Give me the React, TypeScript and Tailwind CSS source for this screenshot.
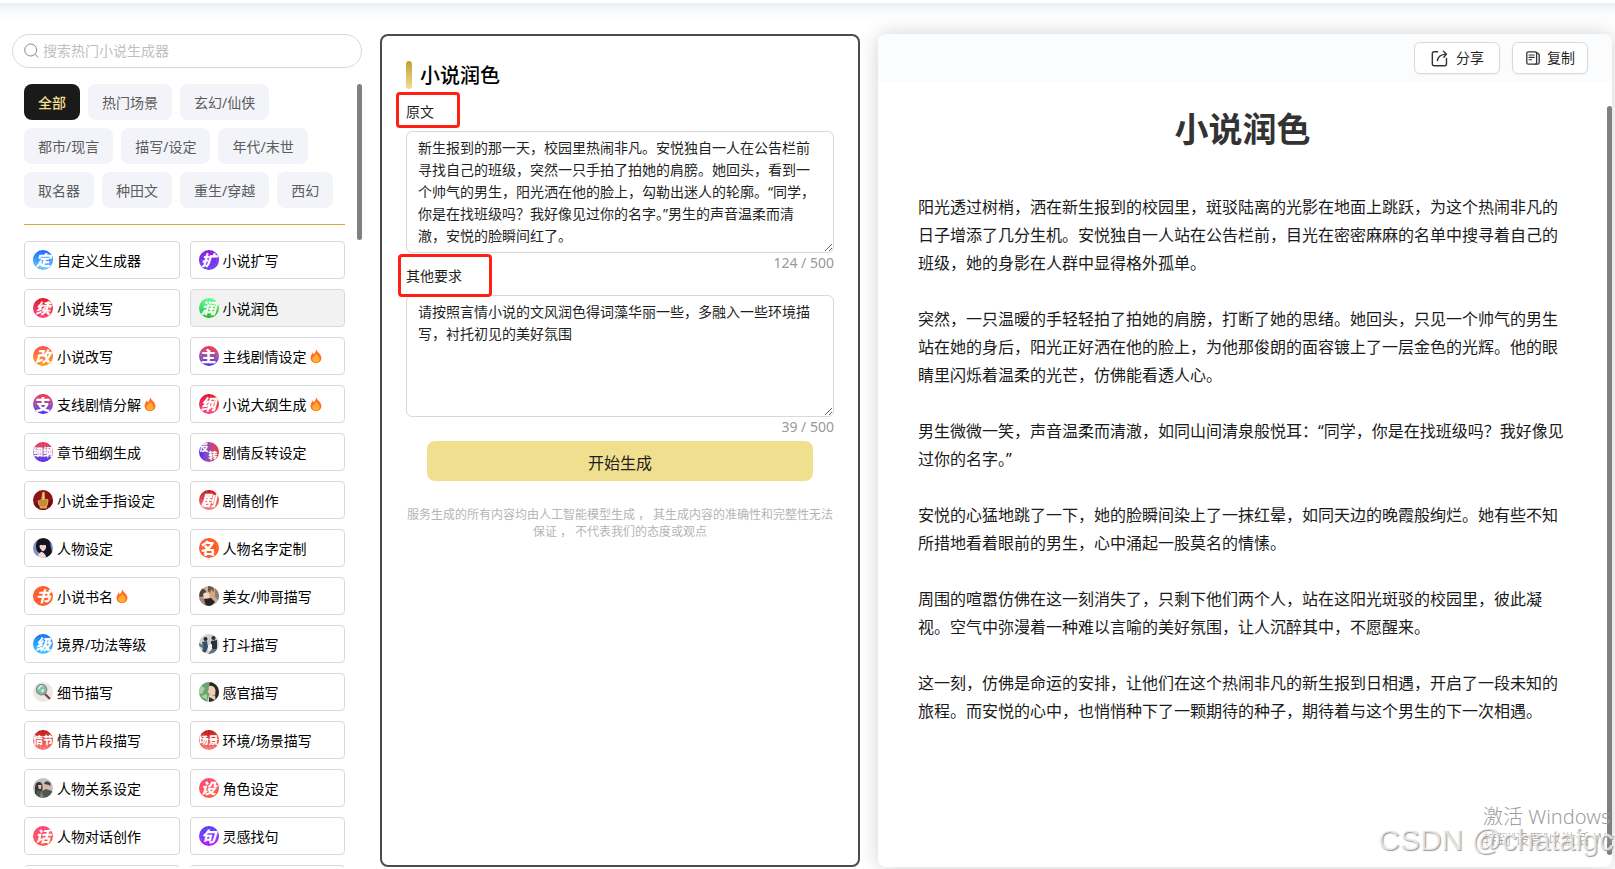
import { useState } from 'react';
import type { ReactNode } from 'react';

const TAGS = ['全部', '热门场景', '玄幻/仙侠', '都市/现言', '描写/设定', '年代/末世', '取名器', '种田文', '重生/穿越', '西幻'];

type Tool = { name: string; icon: ReactNode; hot?: boolean };

function Badge({ text, color, upright }: { text: string; color: string; upright?: boolean }) {
    return (
        <span
            aria-hidden="true"
            className={`relative flex h-5 w-5 shrink-0 items-center justify-center overflow-hidden rounded-full font-black text-white whitespace-nowrap ${upright ? '' : 'italic'} ${text.length > 1 ? 'text-[10px]' : 'text-[15px]'} ${color}`}
        >
            <svg viewBox="0 0 20 20" className="absolute inset-0 h-5 w-5">
                <circle cx="10" cy="10" r="8" fill="none" stroke="#fff" strokeOpacity="0.25" strokeDasharray="1.5 2" />
            </svg>
            <span className="relative leading-5">{text}</span>
        </span>
    );
}

function Avatar({ bg, children }: { bg: string; children: ReactNode }) {
    return (
        <svg viewBox="0 0 20 20" aria-hidden="true" className="h-5 w-5 shrink-0 rounded-full">
            <rect width="20" height="20" fill={bg} />
            {children}
        </svg>
    );
}

const BLUE = 'bg-linear-to-b from-[#1262fa] to-[#70c8ff]';
const PURPLE = 'bg-linear-to-b from-[#8d0bdc] to-[#6242fa]';
const RED = 'bg-linear-to-b from-[#e00d12] to-[#ff3b7c]';
const MIX = 'bg-linear-to-b from-[#fb1f30] to-[#4a0cfb]';
const DARK_RED = 'bg-linear-to-b from-[#bd0207] to-[#ff7a7a]';
const ORANGE = 'bg-[#ff5a26]';
const PINK = 'bg-linear-to-b from-[#ff3f78] to-[#ff5530]';

const TOOLS: Tool[] = [
    { name: '自定义生成器', icon: <Badge text="定" color={BLUE} /> },
    { name: '小说扩写', icon: <Badge text="扩" color={PURPLE} /> },
    { name: '小说续写', icon: <Badge text="续" color={RED} /> },
    { name: '小说润色', icon: <Badge text="润" color="bg-linear-to-b from-[#5cff93] to-[#17b80c]" /> },
    { name: '小说改写', icon: <Badge text="改" color="bg-linear-to-b from-[#ff443c] to-[#ff9d0a]" /> },
    { name: '主线剧情设定', icon: <Badge text="主" color={MIX} upright />, hot: true },
    { name: '支线剧情分解', icon: <Badge text="支" color={MIX} upright />, hot: true },
    { name: '小说大纲生成', icon: <Badge text="纲" color={RED} />, hot: true },
    { name: '章节细纲生成', icon: <Badge text="细纲" color={MIX} upright /> },
    {
        name: '剧情反转设定',
        icon: (
            <span aria-hidden="true" className="flex h-5 w-5 shrink-0 justify-center overflow-hidden rounded-full bg-linear-to-r from-[#4a0cfb] to-[#fb1f30] text-[9px] leading-[11px] font-black text-white">
                <span>反</span>
                <span className="pt-2">转</span>
            </span>
        ),
    },
    {
        name: '小说金手指设定',
        icon: (
            <Avatar bg="#8c1519">
                <path d="M0 14 L20 10 V20 H0Z" fill="#6a0c10" />
                <path d="M9.3 2.2 Q10.8 1 11.8 2.6 L12 9 H14.8 Q16 9.8 15.2 11 Q16 12.2 15 13.2 Q15.5 14.6 14.4 15.2 L13.8 18.5 H6.8 L6.4 16 Q4.2 14 4.8 10.5 L8.2 9.2Z" fill="#d9a34c" />
                <path d="M6 11 H14 M6.2 13 H14 M6.8 15 H13.6" stroke="#9a5d20" strokeWidth="0.7" />
                <path d="M10.3 3 V9" stroke="#f5d894" />
            </Avatar>
        ),
    },
    { name: '剧情创作', icon: <Badge text="剧" color={DARK_RED} /> },
    {
        name: '人物设定',
        icon: (
            <Avatar bg="#8492bd">
                <path d="M3 10 Q2 1 10 0 Q18 0 17.5 8 Q20 14 18 20 H13 L4 13Z" fill="#14131f" />
                <path d="M6.2 7 L13 6.5 Q13.8 11.5 10 13.4 Q6.6 11.5 6.2 7Z" fill="#ead5d6" />
                <path d="M4.5 20 Q5 14.4 9.5 13.4 L12.4 17 L13.4 20Z" fill="#f0dad9" />
                <path d="M5.6 8.4 Q9 5 9.5 7.4 Q12 5.4 14 9 L14.5 4 L8 2Z" fill="#14131f" />
                <path d="M9.2 13.6 L13.6 15.4" stroke="#20151d" strokeWidth="1.1" />
            </Avatar>
        ),
    },
    { name: '人物名字定制', icon: <Badge text="名" color={ORANGE} upright /> },
    { name: '小说书名', icon: <Badge text="书" color={ORANGE} />, hot: true },
    {
        name: '美女/帅哥描写',
        icon: (
            <Avatar bg="#c9ae93">
                <path d="M0 4 Q4 1 7 5 Q9 8 5 10 Q2 12 0 10Z" fill="#54413a" />
                <path d="M9 0 Q15 0 15 5 L12 8 L9 5Z" fill="#6c5445" />
                <path d="M4 8 Q8 4 11 9 L10 14 L5 12Z" fill="#f1d9c8" />
                <path d="M12 3 L15 7 L13 14 L10 12Z" fill="#dca87e" />
                <path d="M5 13 L12 12 L16 16 L12 20 H5Z" fill="#2b2128" />
                <path d="M16 2 L20 6 V15 L16 11Z" fill="#8c8178" />
                <path d="M0 11 L5 13 L7 20 H0Z" fill="#a78778" />
            </Avatar>
        ),
    },
    { name: '境界/功法等级', icon: <Badge text="级" color="bg-linear-to-b from-[#146ff0] to-[#45c9ff]" /> },
    {
        name: '打斗描写',
        icon: (
            <Avatar bg="#cdd2d4">
                <circle cx="6.5" cy="5" r="2" fill="#282b32" />
                <circle cx="14.5" cy="4" r="2.1" fill="#2a3038" />
                <path d="M3 8 L8 7 L9 13 L7 18 L3 19 L4 13Z" fill="#38516a" />
                <path d="M12 7 L18 6 L18 14 L16 18 L12 13Z" fill="#29323c" />
                <path d="M9 11 L13 10 L13 16 L9 17Z" fill="#f3f4f2" />
                <path d="M0 9 L5 12 L4 14 L0 12Z M13 15 L18 15 L14 20 H9Z" fill="#65717b" />
            </Avatar>
        ),
    },
    {
        name: '细节描写',
        icon: (
            <Avatar bg="#ece6e4">
                <path d="M11.5 11.5 L17 17" stroke="#7c4a43" strokeWidth="2.4" strokeLinecap="round" />
                <circle cx="8.6" cy="7.6" r="5.2" fill="#86bdb2" stroke="#7f8f8b" strokeWidth="1.2" />
                <path d="M5.4 7.6 Q6 4.2 9.4 4" fill="none" stroke="#d9f7e4" strokeWidth="1.4" />
                <circle cx="9.6" cy="8.6" r="1.6" fill="#c7efc8" />
            </Avatar>
        ),
    },
    {
        name: '感官描写',
        icon: (
            <Avatar bg="#6fa06f">
                <path d="M0 3 L6 6 L3 12 L0 11Z M2 14 L8 12 L8 18Z" fill="#a9d3a2" />
                <path d="M10 3 Q14 0 17 4 L17 12 L12 14 L8.6 9.8 L9.6 8Z" fill="#efcfb8" />
                <path d="M11 0 H20 V20 H16 L16.5 8 Q15 3 10 4Z" fill="#2d2320" />
                <path d="M8 20 L10 13 L16 14 L17 20Z" fill="#e4d3c4" />
                <path d="M10 15 L16 18 V20 H10Z" fill="#2d2c2c" />
            </Avatar>
        ),
    },
    { name: '情节片段描写', icon: <Badge text="情节" color={DARK_RED} upright /> },
    { name: '环境/场景描写', icon: <Badge text="场景" color={DARK_RED} upright /> },
    {
        name: '人物关系设定',
        icon: (
            <Avatar bg="#bfc3c8">
                <path d="M2 10 Q2 3 7 4 Q10 5 9.5 11 L8 16 L2 16Z" fill="#3e3334" />
                <path d="M5 7 L8.5 7 L8 11 L5.8 11Z" fill="#e6c4b4" />
                <path d="M11 6 Q12 2 16 4 Q18.5 5 17 8Z" fill="#5a3c2d" />
                <path d="M11.5 6.6 L16 6.8 L15.6 10.6 L13 11Z" fill="#dfb79f" />
                <path d="M2 20 L4 12 L9 13 L13 11 L19 13 V20Z" fill="#54574f" />
                <path d="M8 13 L11 20 H7Z" fill="#8e857d" />
            </Avatar>
        ),
    },
    { name: '角色设定', icon: <Badge text="设" color={PINK} /> },
    { name: '人物对话创作', icon: <Badge text="话" color={PINK} /> },
    { name: '灵感找句', icon: <Badge text="句" color="bg-linear-to-b from-[#413cff] to-[#b400ff]" /> },
];

const RESULT = [
    '阳光透过树梢，洒在新生报到的校园里，斑驳陆离的光影在地面上跳跃，为这个热闹非凡的日子增添了几分生机。安悦独自一人站在公告栏前，目光在密密麻麻的名单中搜寻着自己的班级，她的身影在人群中显得格外孤单。',
    '突然，一只温暖的手轻轻拍了拍她的肩膀，打断了她的思绪。她回头，只见一个帅气的男生站在她的身后，阳光正好洒在他的脸上，为他那俊朗的面容镀上了一层金色的光辉。他的眼睛里闪烁着温柔的光芒，仿佛能看透人心。',
    '男生微微一笑，声音温柔而清澈，如同山间清泉般悦耳：“同学，你是在找班级吗？我好像见过你的名字。”',
    '安悦的心猛地跳了一下，她的脸瞬间染上了一抹红晕，如同天边的晚霞般绚烂。她有些不知所措地看着眼前的男生，心中涌起一股莫名的情愫。',
    '周围的喧嚣仿佛在这一刻消失了，只剩下他们两个人，站在这阳光斑驳的校园里，彼此凝视。空气中弥漫着一种难以言喻的美好氛围，让人沉醉其中，不愿醒来。',
    '这一刻，仿佛是命运的安排，让他们在这个热闹非凡的新生报到日相遇，开启了一段未知的旅程。而安悦的心中，也悄悄种下了一颗期待的种子，期待着与这个男生的下一次相遇。',
];

function Flame() {
    return (
        <svg viewBox="0 0 12 14" aria-hidden="true" className="ml-[3px] h-3.5 w-3 shrink-0">
            <path d="M6.2 0 C6.4 2.6 11.4 4.8 11.4 9 C11.4 12 9 14 6 14 C3 14 .6 12 .6 9 C.6 6.8 1.8 5.6 2.4 3.6 C3.2 4.2 3.6 4.8 3.7 5.4 C5.2 4 6 2.4 6.2 0Z" fill="#ff6d22" />
            <path d="M6.4 4.4 C6.8 6.2 9.6 7.4 9.6 10 C9.6 12.2 8 13.4 6 13.4 C4 13.4 2.4 12.2 2.4 10 C2.4 8 5.2 7 6.4 4.4Z" fill="#ffb02e" />
        </svg>
    );
}

type FieldProps = {
    id: string;
    label: string;
    value: string;
    onChange: (v: string) => void;
    count: number;
    mark: string;
};

function Field({ id, label, value, onChange, count, mark }: FieldProps) {
    return (
        <div className="relative">
            <label htmlFor={id} className="block pt-3 pb-2 text-sm leading-[22px] text-[#1f1f1f]">{label}</label>
            <textarea
                id={id}
                rows={5}
                value={value}
                onChange={(e) => onChange(e.target.value)}
                className="block w-full resize rounded-md border border-[#d9d9d9] bg-white px-[11px] py-[5px] text-sm leading-[22px] text-[#1f1f1f] outline-none"
            />
            <div className="-mb-5 text-right text-sm leading-5 text-[#999]">{count} / 500</div>
            <span aria-hidden="true" className={`pointer-events-none absolute rounded-sm border-[3px] border-[#ff2015] ${mark}`} />
        </div>
    );
}

export default function App() {
    const [tag, setTag] = useState('全部');
    const [tool, setTool] = useState('小说润色');
    const [source, setSource] = useState('新生报到的那一天，校园里热闹非凡。安悦独自一人在公告栏前寻找自己的班级，突然一只手拍了拍她的肩膀。她回头，看到一个帅气的男生，阳光洒在他的脸上，勾勒出迷人的轮廓。“同学，你是在找班级吗？我好像见过你的名字。”男生的声音温柔而清澈，安悦的脸瞬间红了。');
    const [extra, setExtra] = useState('请按照言情小说的文风润色得词藻华丽一些，多融入一些环境描写，衬托初见的美好氛围');

    return (
        <div className="relative flex h-screen flex-col overflow-hidden bg-white font-['Noto_Sans','Noto_Sans_CJK_SC',sans-serif] text-black">
            {/* Shadow of the top bar */}
            <div className="mt-[3px] h-5 shrink-0 bg-linear-to-b from-[#e9eff2] via-[#f9fcfc] to-white" />

            <main className="flex min-h-0 flex-1 gap-[18px] pt-[11px] pr-[3px] pb-0.5 pl-3">
                {/* Generator list */}
                <aside className="flex w-[350px] shrink-0 flex-col">
                    <div className="flex h-[34px] shrink-0 items-center gap-[3px] rounded-full border border-[#d9d9d9] px-[11px]">
                        <svg viewBox="0 0 16 16" aria-hidden="true" className="h-4 w-4 shrink-0" fill="none" stroke="#8a8a8a">
                            <circle cx="6.7" cy="7" r="6" />
                            <path d="M11.2 11.4 L14.4 14.6" />
                        </svg>
                        <input
                            type="text"
                            aria-label="搜索热门小说生成器"
                            placeholder="搜索热门小说生成器"
                            className="min-w-0 flex-1 text-sm outline-none placeholder:text-[#bfbfbf]"
                        />
                    </div>

                    <div className="mt-4 flex min-h-0 flex-1 justify-between overflow-hidden pl-3">
                        <div className="w-[321px]">
                            <div className="flex flex-wrap gap-2">
                                {TAGS.map((t) => (
                                    <button
                                        key={t}
                                        type="button"
                                        onClick={() => setTag(t)}
                                        className={`h-9 rounded-lg px-3.5 pt-px text-sm ${tag === t ? 'bg-[#1a1a1a] font-medium text-[#f3df8e]' : 'bg-[#f3f4f9] text-[#5c5c5c]'}`}
                                    >
                                        {t}
                                    </button>
                                ))}
                            </div>
                            <hr className="my-4 border-[#cfa93a]" />
                            <div className="grid grid-cols-2 gap-2.5">
                                {TOOLS.map((t) => (
                                    <button
                                        key={t.name}
                                        type="button"
                                        onClick={() => setTool(t.name)}
                                        className={`flex h-[38px] items-center rounded border border-[#d9d9d9] px-2 text-sm whitespace-nowrap ${tool === t.name ? 'bg-[#f2f2f2]' : 'bg-white'}`}
                                    >
                                        {t.icon}
                                        <span className="ml-1 pt-px">{t.name}</span>
                                        {t.hot && <Flame />}
                                    </button>
                                ))}
                                <div className="h-[38px] rounded border border-[#d9d9d9]" />
                                <div className="h-[38px] rounded border border-[#d9d9d9]" />
                            </div>
                        </div>
                        <div className="h-[156px] w-[5px] rounded-full bg-[#808080]" />
                    </div>
                </aside>

                {/* Input form */}
                <section className="w-[480px] shrink-0 rounded-lg border-2 border-[#4b4b4b] px-6 pt-[25px]">
                    <div className="flex h-7 items-center gap-2">
                        <span className="h-7 w-1.5 rounded-sm bg-linear-to-b from-[#c4a030] to-[#f2df91]" />
                        <h2 className="pt-0.5 text-xl font-medium">小说润色</h2>
                    </div>
                    <Field id="source" label="原文" value={source} onChange={setSource} count={124} mark="top-[3px] -left-2.5 h-9 w-16" />
                    <Field id="extra" label="其他要求" value={extra} onChange={setExtra} count={39} mark="top-px -left-2 h-[43px] w-[94px]" />
                    <div className="mt-6 px-[21px]">
                        <button type="button" className="h-10 w-full rounded-lg bg-[#f1df90] pt-[3px] text-base text-[#1f1f1f]">开始生成</button>
                    </div>
                    <p className="mt-[25px] text-center text-xs leading-[17px] text-[#b5b5b5]">
                        服务生成的所有内容均由人工智能模型生成 ， 其生成内容的准确性和完整性无法保证 ， 不代表我们的态度或观点
                    </p>
                </section>

                {/* Result */}
                <section className="flex min-w-0 flex-1 flex-col rounded-lg bg-white shadow-[0_0_20px_rgba(0,0,0,0.18)]">
                    <div className="flex h-12 shrink-0 items-center justify-end gap-3 rounded-t-lg bg-[#fbfcfe] px-6">
                        <button type="button" className="flex h-8 items-center gap-2 rounded-md border border-[#d9d9d9] bg-white pr-[15px] pl-4 text-sm text-[#1f1f1f] shadow-xs">
                            <svg viewBox="0 0 18 18" aria-hidden="true" className="h-[17px] w-[17px]" fill="none" stroke="#333" strokeWidth="1.5" strokeLinecap="round" strokeLinejoin="round">
                                <path d="M7 1.8 H3.4 Q1.4 1.8 1.4 3.8 V14.6 Q1.4 16.6 3.4 16.6 H14.4 Q16.4 16.6 16.4 14.6 V9" />
                                <path d="M6.8 11.2 Q7.6 5 16 4.4 M13.2 1.4 L16.4 4.4 L13.6 7.6" />
                            </svg>
                            分享
                        </button>
                        <button type="button" className="flex h-8 items-center gap-[7px] rounded-md border border-[#d9d9d9] bg-white pr-3 pl-[13px] text-sm text-[#1f1f1f] shadow-xs">
                            <svg viewBox="0 0 14 14" aria-hidden="true" className="h-3.5 w-3.5" fill="none" stroke="#333" strokeWidth="1.3" strokeLinecap="round" strokeLinejoin="round">
                                <rect x="0.8" y="0.8" width="9.8" height="12.4" rx="1.5" />
                                <path d="M10.8 1.6 L13.2 3.4 V11.6 Q13.2 13.2 11.6 13.2 H9.6" />
                                <path d="M3 4 H8.2 M3 6.4 H8.2 M3 8.8 H5.6" strokeWidth="1.1" />
                            </svg>
                            复制
                        </button>
                    </div>
                    <div className="flex min-h-0 flex-1">
                        <article className="min-w-0 flex-1 px-10 pt-6 text-base leading-7 text-[#1a1a1a]">
                            <h1 className="mb-10 text-center text-[34px] leading-[47px] font-bold text-[#333]">小说润色</h1>
                            {RESULT.map((p) => (
                                <p key={p} className="mb-7">{p}</p>
                            ))}
                        </article>
                        <div className="mt-6 mb-3 w-[5px] rounded-full bg-[#808080]" />
                    </div>
                </section>
            </main>

            {/* Desktop watermarks */}
            <div aria-hidden="true" className="pointer-events-none absolute right-0 bottom-2.5 h-[66px] w-[237px] overflow-hidden whitespace-nowrap">
                <div className="absolute top-2.5 left-[105px] text-xl leading-7 font-light text-[#a0a0a0]">激活 Windows</div>
                <div className="absolute top-9 left-[105px] text-sm leading-5 font-light text-[#a0a0a0]">转到“设置”以激活 Windows。</div>
                <div className="absolute top-[29px] left-0 font-['Liberation_Sans',sans-serif] text-[30px] leading-9 text-white/70 [text-shadow:1px_1px_1px_#999]">CSDN @chataigcw</div>
            </div>
        </div>
    );
}
